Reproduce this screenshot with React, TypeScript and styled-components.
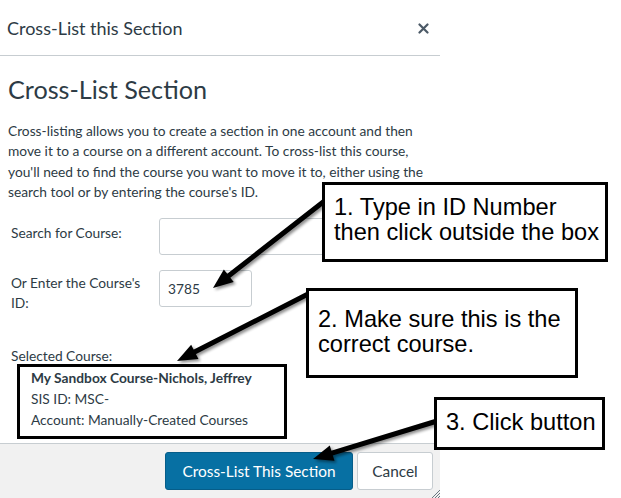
import React from 'react';
import styled, { createGlobalStyle } from 'styled-components';

const GlobalStyle = createGlobalStyle`
  html, body {
    margin: 0;
    padding: 0;
    background: #ffffff;
  }
  body {
    font-family: Lato, 'Noto Sans', sans-serif;
    color: #2d3b45;
  }
`;

const arrows = [
  { x1: 327, y1: 199, x2: 213, y2: 288 },
  { x1: 310, y1: 293, x2: 177, y2: 361 },
  { x1: 437, y1: 421, x2: 313, y2: 459 },
];

const callouts = [
  { top: 182, left: 322, width: 286, height: 80, padTop: 10, lines: ['1. Type in ID Number', 'then click outside the box'] },
  { top: 288, left: 306, width: 272, height: 90, padTop: 16, lines: ['2. Make sure this is the', 'correct course.'] },
  { top: 397, left: 434, width: 171, height: 53, padTop: 10, lines: ['3. Click button'] },
];

const Arrow = ({ x1, y1, x2, y2 }: { x1: number; y1: number; x2: number; y2: number }) => {
  const dx = x2 - x1;
  const dy = y2 - y1;
  const len = Math.sqrt(dx * dx + dy * dy);
  const ux = dx / len;
  const uy = dy / len;
  const headLen = 20;
  const headW = 8;
  const bx = x2 - ux * headLen;
  const by = y2 - uy * headLen;
  const px = -uy * headW;
  const py = ux * headW;
  const head = `${x2},${y2} ${bx + px},${by + py} ${bx - px},${by - py}`;
  return (
    <g filter='url(#shadow)'>
      <line x1={x1} y1={y1} x2={bx + ux * 2} y2={by + uy * 2} stroke='#000' strokeWidth={5} strokeLinecap='round' />
      <polygon points={head} fill='#000' />
    </g>
  );
};

export default function App() {
  return (
    <>
      <GlobalStyle />
      <Page>
        <Dialog>
          <Header>
            <HeaderTitle>Cross-List this Section</HeaderTitle>
            <CloseButton aria-label='Close'>
              <svg width='11' height='11' viewBox='0 0 11 11'>
                <path d='M1.5 1.5 L9.5 9.5 M9.5 1.5 L1.5 9.5' stroke='#4b5966' strokeWidth='2.2' strokeLinecap='round' />
              </svg>
            </CloseButton>
          </Header>
          <Body>
            <Title>Cross-List Section</Title>
            <Intro>
              Cross-listing allows you to create a section in one account and then move it to a course on a
              different account. To cross-list this course, you'll need to find the course you want to move it
              to, either using the search tool or by entering the course's ID.
            </Intro>
            <FormRow>
              <Label $padTop={5}>Search for Course:</Label>
              <Input $width={210} />
            </FormRow>
            <FormRow>
              <Label $padTop={3}>Or Enter the Course's ID:</Label>
              <Input $width={93} defaultValue='3785' />
            </FormRow>
            <SelectedLabel>Selected Course:</SelectedLabel>
            <CourseBox>
              <CourseName>My Sandbox Course-Nichols, Jeffrey</CourseName>
              <CourseLine>SIS ID: MSC-</CourseLine>
              <CourseLine>Account: Manually-Created Courses</CourseLine>
            </CourseBox>
          </Body>
          <Footer>
            <PrimaryButton>Cross-List This Section</PrimaryButton>
            <SecondaryButton>Cancel</SecondaryButton>
            <Grip>
              <svg width='9' height='9' viewBox='0 0 9 9'>
                <path d='M1 9 L9 1 M4 9 L9 4 M7 9 L9 7' stroke='#6b7780' strokeWidth='1' />
              </svg>
            </Grip>
          </Footer>
        </Dialog>

        <ArrowLayer width='621' height='498' viewBox='0 0 621 498'>
          <defs>
            <filter id='shadow' x='-20%' y='-20%' width='140%' height='140%'>
              <feGaussianBlur in='SourceAlpha' stdDeviation='1.6' />
              <feOffset dx='1.5' dy='2' result='blur' />
              <feComponentTransfer>
                <feFuncA type='linear' slope='0.45' />
              </feComponentTransfer>
              <feMerge>
                <feMergeNode />
                <feMergeNode in='SourceGraphic' />
              </feMerge>
            </filter>
          </defs>
          {arrows.map((a, i) => (
            <Arrow key={i} {...a} />
          ))}
        </ArrowLayer>

        {callouts.map((c, i) => (
          <Callout key={i} $top={c.top} $left={c.left} $width={c.width} $height={c.height} $padTop={c.padTop}>
            {c.lines.map(line => (
              <div key={line}>{line}</div>
            ))}
          </Callout>
        ))}
      </Page>
    </>
  );
}

const Page = styled.div`
  position: relative;
  width: 621px;
  height: 498px;
  overflow: hidden;
  background: #ffffff;
`;

const Dialog = styled.div`
  width: 440px;
  height: 498px;
  display: flex;
  flex-direction: column;
  background: #ffffff;
`;

const Header = styled.div`
  height: 55px;
  flex: 0 0 auto;
  display: flex;
  align-items: center;
  justify-content: space-between;
  padding: 0 10px 0 7px;
  border-bottom: 1px solid #c7cdd1;
`;

const HeaderTitle = styled.h1`
  margin: 0;
  font-size: 18px;
  font-weight: 400;
  color: #2d3b45;
`;

const CloseButton = styled.div`
  display: flex;
  align-items: center;
  justify-content: center;
  width: 14px;
  height: 14px;
  margin-top: 2px;
`;

const Body = styled.div`
  flex: 1;
  padding: 17px 8px 0 8px;
  display: flex;
  flex-direction: column;
`;

const Title = styled.h2`
  margin: 0;
  font-size: 25.2px;
  font-weight: 400;
  line-height: 32px;
  color: #2d3b45;
`;

const Intro = styled.p`
  margin: 16px 0 16px 0;
  max-width: 420px;
  font-size: 13.75px;
  line-height: 20.3px;
  color: #2d3b45;
`;

const FormRow = styled.div`
  display: grid;
  grid-template-columns: 151px auto;
  align-items: start;
  margin-bottom: 15px;
`;

const Label = styled.label<{ $padTop?: number }>`
  padding-left: 3px;
  padding-top: ${p => p.$padTop ?? 0}px;
  width: 142px;
  font-size: 13.75px;
  line-height: 20px;
  color: #2d3b45;
`;

const Input = styled.input<{ $width: number }>`
  box-sizing: border-box;
  width: ${p => p.$width}px;
  height: 37px;
  border: 1px solid #c7cdd1;
  border-radius: 3px;
  padding: 0 8px;
  font-family: Lato, 'Noto Sans', sans-serif;
  font-size: 13.75px;
  color: #2d3b45;
  background: #ffffff;
  outline: none;
`;

const SelectedLabel = styled.div`
  margin-top: 20px;
  padding-left: 3px;
  font-size: 13.75px;
  line-height: 16px;
  color: #2d3b45;
`;

const CourseBox = styled.div`
  margin: 0 0 0 9px;
  width: 270px;
  box-sizing: border-box;
  border: 3px solid #000;
  padding: 0 0 6px 11px;
  font-size: 13.75px;
  line-height: 21px;
  color: #2d3b45;
`;

const CourseName = styled.div`
  font-weight: 700;
`;

const CourseLine = styled.div``;

const Footer = styled.div`
  position: relative;
  height: 54px;
  flex: 0 0 auto;
  margin-top: auto;
  border-top: 1px solid #c7cdd1;
  background: #f1f1f1;
  display: flex;
  align-items: center;
  justify-content: flex-end;
  gap: 4px;
  padding: 0 7px 0 0;
`;

const BaseButton = styled.button`
  box-sizing: border-box;
  height: 38px;
  border-radius: 3px;
  font-family: Lato, 'Noto Sans', sans-serif;
  font-size: 15.4px;
  padding: 0 8px;
  cursor: pointer;
`;

const PrimaryButton = styled(BaseButton)`
  background: #0770a3;
  border: 1px solid #065d89;
  color: #ffffff;
  width: 188px;
`;

const SecondaryButton = styled(BaseButton)`
  background: #ffffff;
  border: 1px solid #c7cdd1;
  color: #2d3b45;
  width: 76px;
`;

const Grip = styled.div`
  position: absolute;
  right: 0;
  bottom: 0;
  width: 9px;
  height: 9px;
  line-height: 0;
`;

const ArrowLayer = styled.svg`
  position: absolute;
  left: 0;
  top: 0;
  pointer-events: none;
`;

const Callout = styled.div<{ $top: number; $left: number; $width: number; $height: number; $padTop: number }>`
  position: absolute;
  top: ${p => p.$top}px;
  left: ${p => p.$left}px;
  width: ${p => p.$width}px;
  height: ${p => p.$height}px;
  box-sizing: border-box;
  border: 3px solid #000;
  background: #ffffff;
  padding: ${p => p.$padTop}px 0 0 9px;
  font-family: 'Liberation Sans', Arial, sans-serif;
  font-size: 23.6px;
  line-height: 24.5px;
  color: #000;
  white-space: nowrap;
`;
